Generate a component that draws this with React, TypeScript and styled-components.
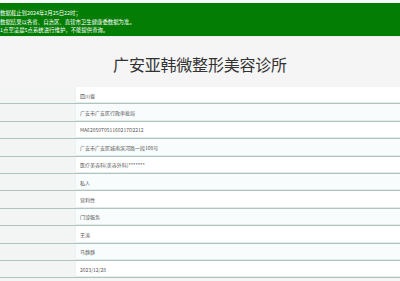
import React from 'react'
import styled, { createGlobalStyle } from 'styled-components'

const GlobalStyle = createGlobalStyle`
  html, body {
    margin: 0;
    padding: 0;
    background: #f5f5f5;
    font-family: "Noto Sans CJK SC", "Noto Sans", sans-serif;
  }
`

const rows = [
  '四川省',
  '广安市广安区行政审批局',
  'MA62850T051160217D2212',
  '广安市广安区城南滨河路一段108号',
  '医疗美容科(美容外科)*******',
  '私人',
  '营利性',
  '门诊服务',
  '王涛',
  '马静静',
  '2023/12/28',
]

function App() {
  return (
    <Page>
      <GlobalStyle />
      <Notice>
        <p>数据截止到2024年2月25日22时；</p>
        <p>数据结果以各省、自治区、直辖市卫生健康委数据为准。</p>
        <p>1点至凌晨5点系统进行维护，不能提供查询。</p>
      </Notice>
      <Title>广安亚韩微整形美容诊所</Title>
      <Table>
        {rows.map((text, index) => (
          <Row key={index} $odd={index % 2 === 1}>
            <Label />
            <Value>{text}</Value>
          </Row>
        ))}
      </Table>
    </Page>
  )
}

const Page = styled.div`
  width: 400px;
  height: 281px;
  overflow: hidden;
  border-top: 3px solid #fafafa;
`

const Notice = styled.div`
  height: 34px;
  background: #037d03;
  color: #ffffff;
  box-sizing: border-box;
  padding: 6px 0 0 0;
  font-size: 5.4px;
  line-height: 8.5px;
  border-bottom: 1px solid #e9efe9;

  p {
    margin: 0;
    white-space: nowrap;
  }
`

const Title = styled.h1`
  margin: 0;
  height: 50px;
  display: flex;
  align-items: center;
  justify-content: center;
  padding-top: 3px;
  box-sizing: border-box;
  font-size: 16px;
  font-weight: normal;
  color: #333333;
  letter-spacing: -0.2px;
`

const Table = styled.div`
  display: flex;
  flex-direction: column;
`

const Row = styled.div<{ $odd: boolean }>`
  display: grid;
  grid-template-columns: 76px 1fr;
  height: 17.4px;
  box-sizing: border-box;
  border-bottom: 1px solid #afc4be;
  box-shadow: inset 0 -1px 0 #e3ecea;
  background: ${p => (p.$odd ? '#f8fcfc' : '#ffffff')};
`

const Label = styled.div`
  background: #f3f5f5;
  border-right: 1px solid #eef1f1;
`

const Value = styled.div`
  display: flex;
  align-items: center;
  padding-left: 4px;
  font-size: 5px;
  color: #555555;
  white-space: nowrap;
`

export default App
